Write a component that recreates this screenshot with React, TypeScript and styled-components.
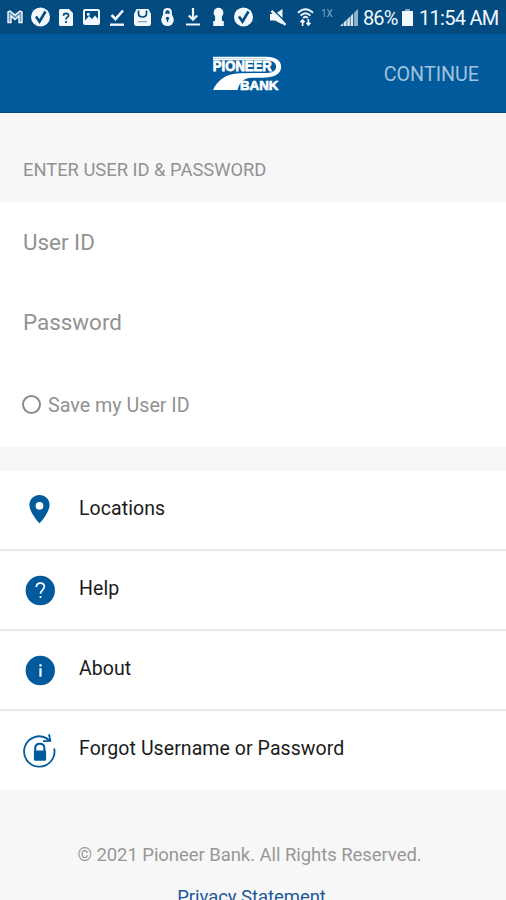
import React from "react";
import styled, { createGlobalStyle } from "styled-components";

const GlobalStyle = createGlobalStyle`
  *, *::before, *::after { box-sizing: border-box; }
  html, body { margin: 0; padding: 0; height: 100%; overflow: hidden; }
  body { background: #f7f7f7; font-family: Roboto, "Liberation Sans", sans-serif; }
`;

const Screen = styled.div`
  width: 506px;
  height: 900px;
  overflow: hidden;
  display: flex;
  flex-direction: column;
  background: #f7f7f7;
`;

const StatusBar = styled.div`
  height: 34px;
  flex: none;
  display: flex;
  align-items: center;
  padding-left: 7px;
  background: #024b81;
  color: #f2f7fb;
`;

const StatusIcon = styled.svg<{ $gap?: number }>`
  display: block;
  flex: none;
  margin-left: ${(p) => p.$gap ?? 0}px;
  overflow: visible;
`;

const StatusText = styled.span<{ $gap: number; $width: number; $size: number; $spacing?: number }>`
  flex: none;
  margin-left: ${(p) => p.$gap}px;
  width: ${(p) => p.$width}px;
  font-size: ${(p) => p.$size}px;
  letter-spacing: ${(p) => p.$spacing ?? 0}px;
  line-height: 34px;
  height: 32px;
  white-space: nowrap;
`;

const NetworkLabel = styled(StatusText)`
  color: #7fa8c8;
  line-height: 26px;
`;

const Header = styled.header`
  height: 79px;
  flex: none;
  display: grid;
  grid-template-columns: 212px 72px 1fr;
  align-items: center;
  background: #005a9c;
  border-bottom: 1px solid #024b85;
`;

const Continue = styled.button`
  justify-self: end;
  margin: 3px 27px 0 0;
  padding: 0;
  border: 0;
  background: none;
  color: #a3c2dc;
  font: 400 19.7px/24px Roboto, sans-serif;
`;

const SectionTitle = styled.h2`
  margin: 0;
  flex: none;
  height: 89px;
  padding: 45px 23px 0;
  color: #929292;
  font-size: 18.35px;
  line-height: 24px;
  font-weight: 400;
`;

const Form = styled.div`
  flex: none;
  background: #fff;
`;

const Field = styled.div`
  height: 80px;
  margin-left: 16px;
  padding: 27px 0 0 7px;
  border-bottom: 1px solid #fbfbfb;
  color: #929292;
  font-size: 22.4px;
  line-height: 27px;
`;

const SaveRow = styled.label`
  display: flex;
  align-items: center;
  height: 85px;
  padding-left: 22px;
  color: #929292;
  font-size: 19.7px;
  line-height: 26px;
`;

const SaveText = styled.span`
  padding-top: 3px;
`;

const Radio = styled.span`
  width: 19px;
  height: 19px;
  margin-right: 7px;
  border: 2px solid #8a8a8a;
  border-radius: 50%;
`;

const Menu = styled.nav`
  flex: none;
  margin-top: 24px;
  background: #fff;
`;

const MenuRow = styled.div`
  display: flex;
  height: 80px;
  padding: 0 0 0 22px;
  border-bottom: 2px solid #e9e9e9;
  &:last-child { border-bottom: 0; height: 79px; }
`;

const MenuIcon = styled.svg`
  width: 36px;
  height: 36px;
  margin-top: 20.5px;
  flex: none;
  overflow: visible;
`;

const MenuLabel = styled.span`
  margin: 25px 0 0 21px;
  color: #1b1b1b;
  font-size: 19.5px;
  line-height: 26px;
  letter-spacing: 0.07px;
`;

const Footer = styled.footer`
  flex: none;
  display: flex;
  flex-direction: column;
  align-items: center;
  padding: 53px 7px 0 0;
  color: #979797;
  font-size: 18.5px;
  line-height: 24px;
  letter-spacing: -0.06px;
`;

const Privacy = styled.a`
  margin: 18px 0 0 4px;
  color: #1d579b;
`;

const BLUE = "#005a9c";

function CheckBadge({ gap }: { gap: number }) {
  return (
    <StatusIcon $gap={gap} width="19" height="20" viewBox="0 0 19 20">
      <circle cx="9.5" cy="10" r="9.5" fill="currentColor" />
      <path d="M5 9.5 L8.5 14.5 L14.5 4.5" fill="none" stroke="#024b81" strokeWidth="2.6" />
    </StatusIcon>
  );
}

function StatusIcons() {
  return (
    <>
      <StatusIcon width="16" height="14" viewBox="0 0 16 14">
        <path d="M1 2 L3 1 L8 5 L13 1 L15 2 V12.5 H12 V6 L8 9.5 L4 6 V12.5 H1 Z" fill="#6d98bb" stroke="currentColor" strokeWidth="1.4" />
      </StatusIcon>
      <CheckBadge gap={8} />
      <StatusIcon $gap={9} width="14" height="17" viewBox="0 0 14 17">
        <path d="M1.5 0 H10 L14 4 V15.5 Q14 17 12.5 17 H1.5 Q0 17 0 15.5 V1.5 Q0 0 1.5 0Z" fill="currentColor" />
        <path d="M4.4 6.7 Q4.6 4.3 7 4.3 Q9.7 4.4 9.5 6.6 Q9.4 7.8 7.9 8.6 Q7 9.2 7 10.6 M7 12 V14" fill="none" stroke="#024b81" strokeWidth="1.7" />
      </StatusIcon>
      <StatusIcon $gap={10} width="17" height="16" viewBox="0 0 17 16">
        <rect x="1" y="1" width="15" height="14" rx="1" fill="none" stroke="currentColor" strokeWidth="2" />
        <path d="M2 11.5 L6 7 L9 10 L12 6.5 L15 10 V14 H2Z" fill="currentColor" />
        <rect x="4" y="4" width="2.6" height="2.6" fill="currentColor" />
      </StatusIcon>
      <StatusIcon $gap={9} width="16" height="17" viewBox="0 0 16 17" fill="none" stroke="currentColor">
        <path d="M2.5 6 L6.5 10 L14 1.5" strokeWidth="2.6" />
        <path d="M1 15.7 H15" strokeWidth="2.4" />
      </StatusIcon>
      <StatusIcon $gap={9} width="17" height="17" viewBox="0 0 17 17">
        <path d="M2.5 0 H14.5 L17 5 V14.5 Q17 17 14.5 17 H2.5 Q0 17 0 14.5 V5Z" fill="currentColor" />
        <path d="M4.5 1.5 V4.5 Q4.5 8 8.5 8 Q12.5 8 12.5 4.5 V1.5" fill="none" stroke="#024b81" strokeWidth="1.7" />
        <path d="M4 12.7 H13" stroke="#7ba3c3" strokeWidth="1.2" />
      </StatusIcon>
      <StatusIcon $gap={10} width="13" height="18" viewBox="0 0 13 18">
        <path d="M3.2 8 V4.5 Q3.2 1.2 6.5 1.2 Q9.8 1.2 9.8 4.5 V8" fill="none" stroke="currentColor" strokeWidth="2.3" />
        <circle cx="6.5" cy="11.7" r="6.3" fill="currentColor" />
        <circle cx="6.5" cy="10.3" r="1.6" fill="#024b81" />
        <path d="M6.5 10 V14" stroke="#024b81" strokeWidth="1.4" />
      </StatusIcon>
      <StatusIcon $gap={12} width="14" height="18" viewBox="0 0 14 18" fill="none" stroke="currentColor">
        <path d="M7 0 V11 M2.8 7.5 L7 11.8 L11.2 7.5" strokeWidth="2.2" />
        <path d="M0 16.5 H14" strokeWidth="2" />
      </StatusIcon>
      <StatusIcon $gap={13} width="11" height="18" viewBox="0 0 11 18" fill="currentColor">
        <circle cx="5.5" cy="4.7" r="4.9" />
        <path d="M2.2 7 H8.8 L9 13 H10.8 V18 H.2 V13 H2Z" />
      </StatusIcon>
      <CheckBadge gap={10} />
      <StatusIcon $gap={17} width="17" height="17" viewBox="0 0 17 17">
        <path d="M0 5 H5 L12.5 0 V15.5 L5 11.5 H0Z" fill="currentColor" />
        <path d="M3.2 1 L16.5 13.8" stroke="#024b81" strokeWidth="1.5" />
        <path d="M1.5 1.8 L15.5 15.8" stroke="currentColor" strokeWidth="2.6" />
      </StatusIcon>
      <StatusIcon $gap={10} width="17" height="18" viewBox="0 0 17 18" fill="none" stroke="currentColor">
        <path d="M1 4.8 Q8.5 -2.3 16 4.8 M3.6 7.6 Q8.5 2.8 13.4 7.6 M6.2 10 Q8.5 7.5 10.8 10" strokeWidth="2" />
        <path d="M5.6 18 V12 M3.5 14.3 L5.6 12 L7.5 14.3 M11.4 11 V17 M9.5 14.7 L11.4 17 L13.4 14.7" strokeWidth="1.7" />
      </StatusIcon>
      <NetworkLabel $gap={7} $width={13} $size={10}>1X</NetworkLabel>
      <StatusIcon $gap={6} width="18" height="17" viewBox="0 0 18 17">
        <path d="M0 17 L13 4.8 V17Z" fill="currentColor" opacity=".9" />
        <path d="M13.5 4.3 L18 0 V17 H13.5Z" fill="#91b2cd" />
        <path d="M3.4 12 V17 M6.9 9 V17 M10.3 6 V17 M13.6 3 V17" stroke="#024b81" strokeWidth=".7" />
      </StatusIcon>
      <StatusText $gap={5} $width={37} $size={20} $spacing={-0.9}>86%</StatusText>
      <StatusIcon $gap={2} width="11" height="17" viewBox="0 0 11 17">
        <path d="M3 0 H8 V3 H3Z" fill="#7ba3c3" />
        <path d="M0 2 H11 V17 H0Z" fill="currentColor" />
      </StatusIcon>
      <StatusText $gap={6} $width={83} $size={20} $spacing={-0.72}>11:54 AM</StatusText>
    </>
  );
}

const Logo = styled.svg`
  display: block;
  width: 72px;
  height: 36px;
  margin-top: 1px;
`;

function PioneerLogo() {
  return (
    <Logo viewBox="0 0 72 36" role="img" aria-label="Pioneer Bank">
      <path
        d="M1 0.8 H54 C64 0.8 69.2 5 69.2 10.8 C69.2 18 62 21.8 50 21.8 H40 C31 21.8 27.5 27 25.5 34 H1 C5 25 13 17.6 28 17.2 L55 17 C61.5 16.6 64.4 14 64 10 C63.5 6 60 4.3 52 4.3 H1Z"
        fill="#fff"
      />
      <path d="M1 2.6 H54" stroke="#a9c7df" strokeWidth=".8" />
      <text x="0.8" y="15.2" textLength="59" lengthAdjust="spacingAndGlyphs" fill="#fff" stroke="#fff" strokeWidth=".8" fontFamily="Liberation Sans" fontWeight="700" fontSize="14">PIONEER</text>
      <text x="28" y="33.8" textLength="38.5" lengthAdjust="spacingAndGlyphs" fill="#fff" stroke="#fff" strokeWidth=".7" fontFamily="Liberation Sans" fontWeight="700" fontSize="13.5">BANK</text>
    </Logo>
  );
}

const drawings: Record<string, React.ReactNode> = {
  pin: (
    <path fillRule="evenodd" fill={BLUE} d="M17.5 3 C11.8 3 7.4 7.4 7.4 13 C7.4 20.3 17.5 31.5 17.5 31.5 S27.6 20.3 27.6 13 C27.6 7.4 23.2 3 17.5 3Z M17.5 9.9 A3.9 3.9 0 1 1 17.5 17.7 A3.9 3.9 0 1 1 17.5 9.9Z" />
  ),
  help: (
    <>
      <circle cx="18.3" cy="18.5" r="14.7" fill={BLUE} />
      <path d="M14.4 15 C14.4 12.5 16 11.2 18.4 11.2 C20.8 11.2 22.3 12.6 22.3 14.7 C22.3 17.6 18.5 18.1 18.5 21.8 M18.5 23.9 V26" fill="none" stroke="#fff" strokeWidth="1.7" />
    </>
  ),
  info: (
    <>
      <circle cx="18.3" cy="18.5" r="14.7" fill={BLUE} />
      <path d="M18.5 16.3 V24.8 M18.5 12.2 V14.4" stroke="#fff" strokeWidth="2.2" />
    </>
  ),
  reset: (
    <>
      <path d="M32.2 16.5 A15.2 15.2 0 1 1 25.8 6.9" fill="none" stroke={BLUE} strokeWidth="1.8" />
      <path d="M21 9.2 L28.4 9 L27 2.2 M23.5 5.7 L27.8 8.8" fill="none" stroke={BLUE} strokeWidth="1.8" />
      <path d="M13.2 20 V16.5 Q13.2 11.8 17.8 11.8 Q22.4 11.8 22.4 16.5 V20" fill="none" stroke={BLUE} strokeWidth="2.1" />
      <rect x="11.9" y="18.4" width="12.2" height="10.3" rx="1.3" fill={BLUE} />
    </>
  ),
};

const entries = [
  { icon: "pin", label: "Locations" },
  { icon: "help", label: "Help" },
  { icon: "info", label: "About" },
  { icon: "reset", label: "Forgot Username or Password" },
];

export default function App() {
  return (
    <>
      <GlobalStyle />
      <Screen>
        <StatusBar><StatusIcons /></StatusBar>
        <Header>
          <span />
          <PioneerLogo />
          <Continue>CONTINUE</Continue>
        </Header>
        <SectionTitle>ENTER USER ID &amp; PASSWORD</SectionTitle>
        <Form>
          <Field>User ID</Field>
          <Field>Password</Field>
          <SaveRow><Radio /><SaveText>Save my User ID</SaveText></SaveRow>
        </Form>
        <Menu>
          {entries.map((e) => (
            <MenuRow key={e.icon}>
              <MenuIcon viewBox="0 0 36 36">{drawings[e.icon]}</MenuIcon>
              <MenuLabel>{e.label}</MenuLabel>
            </MenuRow>
          ))}
        </Menu>
        <Footer>
          <span>© 2021 Pioneer Bank. All Rights Reserved.</span>
          <Privacy>Privacy Statement</Privacy>
        </Footer>
      </Screen>
    </>
  );
}
